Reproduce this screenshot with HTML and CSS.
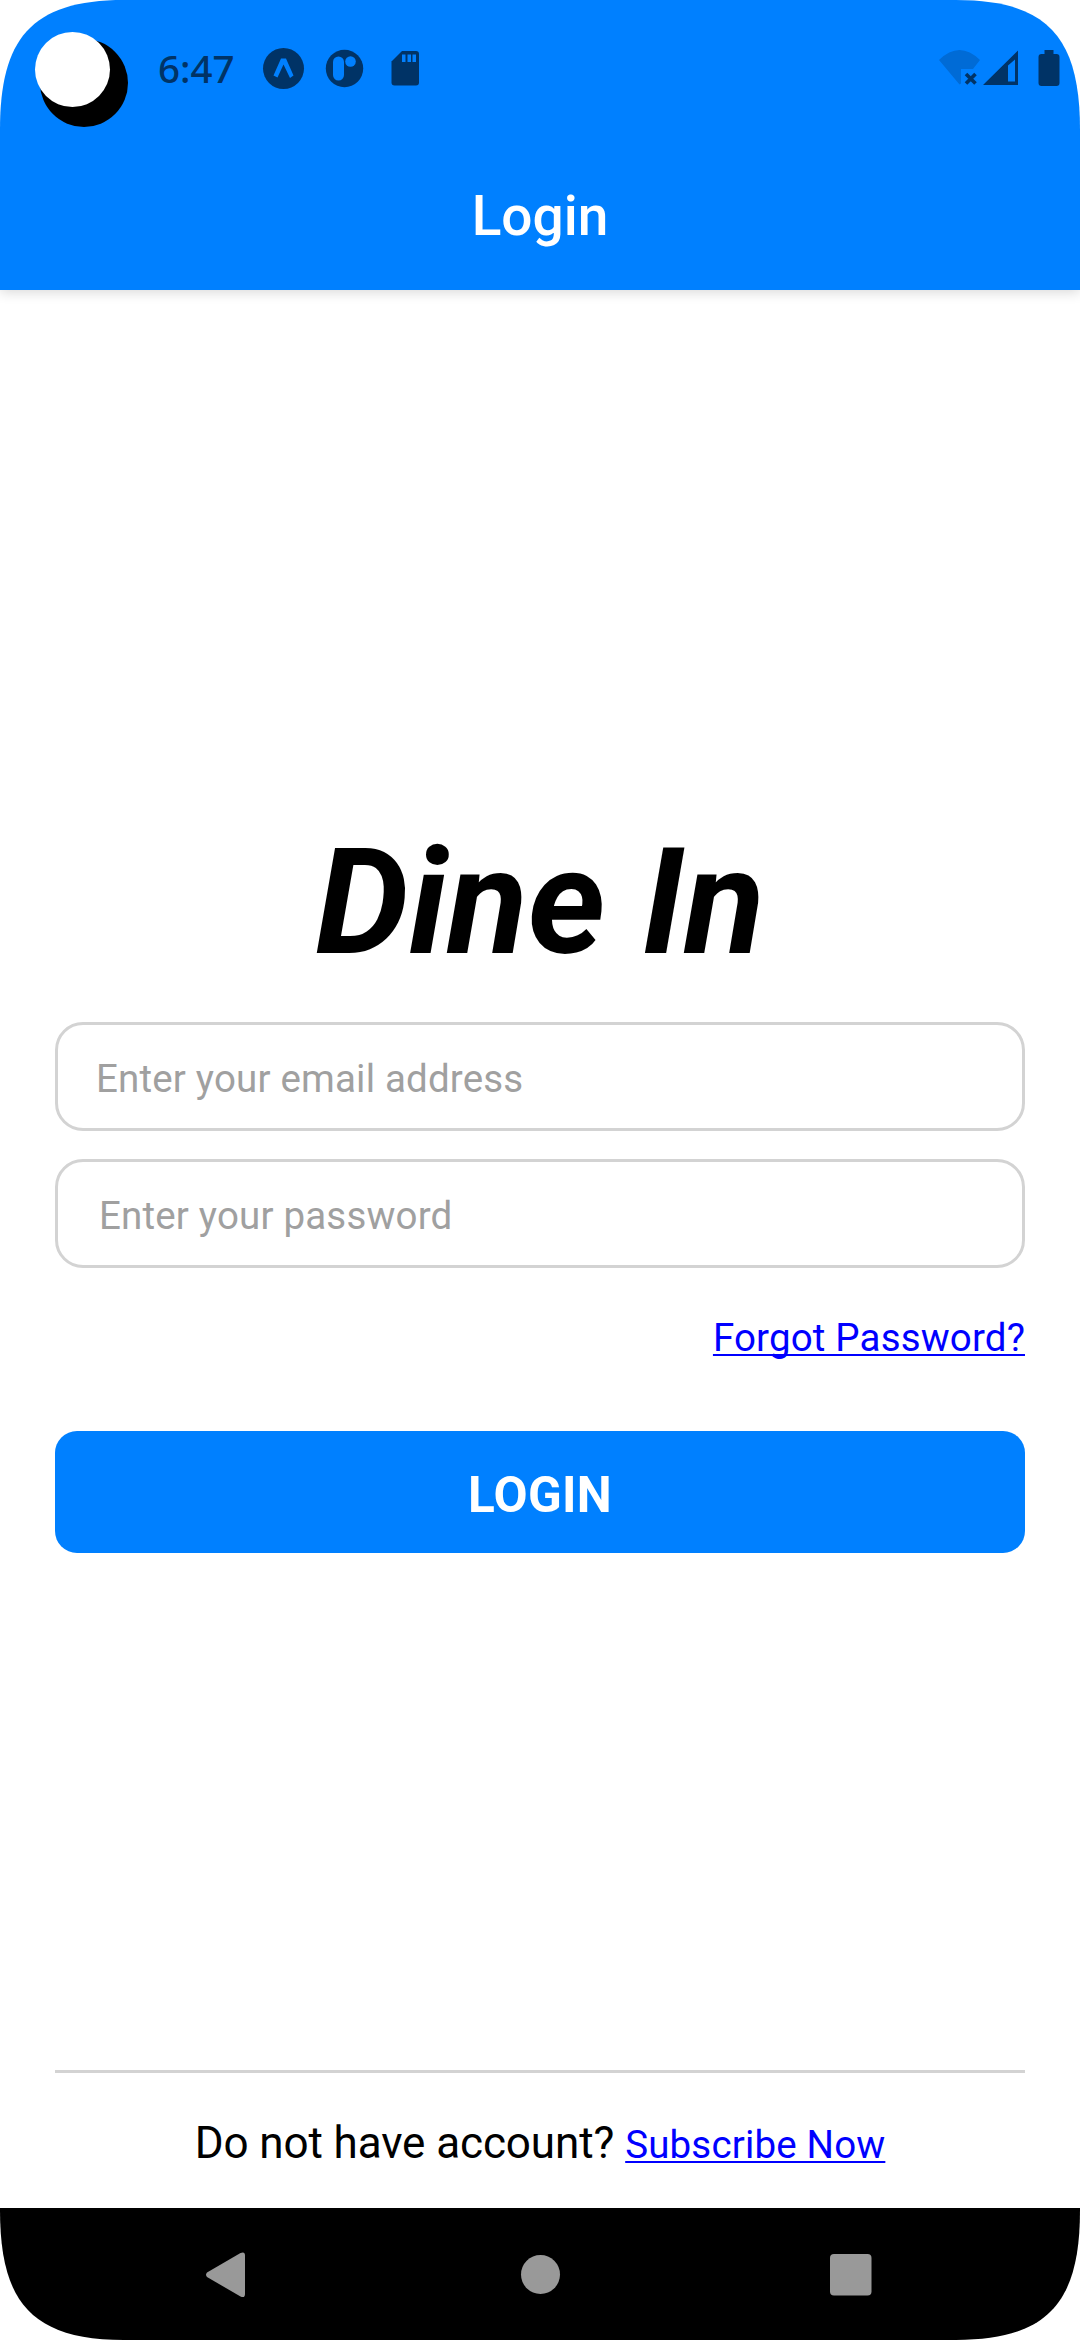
FILE: index.html
```html
<!DOCTYPE html>
<html lang="en">
<head>
<meta charset="utf-8">
<title>Login</title>
<link rel="stylesheet" href="styles.css">
</head>
<body>
<div class="screen">
  <header class="header">
    <div class="status">
      <svg class="camera" viewBox="0 0 140 140"><circle cx="84" cy="83" r="44"/><circle class="lens" cx="72.5" cy="69.5" r="37.5"/></svg>
      <span class="time">6:47</span>
      <svg class="notices" viewBox="0 0 170 60">
        <circle cx="28.5" cy="28.5" r="20.5"/>
        <path class="cut" d="M26 18.500h5L38.500 35.500 35 38 28.500 24.500 22.500 37.500 18.500 35.500z"/>
        <circle cx="89.500" cy="28.500" r="18.700"/>
        <rect class="cut" x="78" y="16.500" width="11" height="24" rx="5.500"/>
        <circle class="cut" cx="95.500" cy="21.500" r="5.300"/>
        <path d="M147 11h14q3 0 3 3v28.500q0 3-3 3h-21.500q-3 0-3-3V21.500z"/>
        <path class="cut" d="M147 14.500h3.500v7.500H147zM152.500 14.500h3.500v7.500h-3.500zM157.500 14.500h3.500v7.500h-3.500z"/>
      </svg>
      <svg class="signals" viewBox="0 0 130 50">
        <path class="faint" d="M3 20Q23.500 0 44 20L37 29H25v14.500L23.500 44.500z"/>
        <path class="cross" d="M30 34l9.500 9.500M39.500 34l-9.500 9.500"/>
        <path fill-rule="evenodd" d="M82 10.500v34.500H47zM79 19.500l-7 6v16h7z"/>
        <path d="M108.500 10h9v4h3q3 0 3 3v26q0 3-3 3h-15q-3 0-3-3V17q0-3 3-3h3z"/>
      </svg>
    </div>
    <h1 class="title">Login</h1>
  </header>
  <main class="main">
    <h2 class="brand">Dine In</h2>
    <form class="form">
      <input class="field" type="email" placeholder="Enter your email address">
      <input class="field field-password" type="password" placeholder="Enter your password">
      <a class="link forgot" href="#">Forgot Password?</a>
      <button class="submit" type="button">LOGIN</button>
    </form>
    <footer class="signup">
      <span>Do not have account?</span>
      <a class="link" href="#">Subscribe Now</a>
    </footer>
  </main>
  <nav class="nav">
    <svg viewBox="0 0 1080 132">
      <path d="M207 64.500L240.500 45Q245 43 245 47.500V86Q245 90.500 240.500 88.500L207 69Q205 66.800 207 64.500z"/>
      <circle cx="540.500" cy="66.500" r="19.500"/>
      <rect x="830" y="46" width="41.500" height="41.500" rx="4"/>
    </svg>
  </nav>
</div>
</body>
</html>
```
FILE: styles.css
```css
* { box-sizing: border-box; }

body {
  margin: 0;
  background: #fff;
  font-family: Roboto, "Liberation Sans", sans-serif;
}

.screen {
  display: flex;
  flex-direction: column;
  width: 1080px;
  height: 2340px;
  background: #fff;
  clip-path: path("M0 130C0 40 30 0 124 0H956C1050 0 1080 40 1080 130V2210C1080 2300 1050 2340 956 2340H124C30 2340 0 2300 0 2210Z");
}

.header {
  height: 290px;
  background: #0080ff;
  box-shadow: 0 2px 12px rgba(0, 0, 0, 0.16);
}

.status {
  display: flex;
  height: 140px;
}

.camera { width: 140px; height: 140px; }
.lens { fill: #fff; }

.time {
  width: 96px;
  margin-left: 18px;
  padding-top: 45px;
  font-family: "Noto Sans", sans-serif;
  font-size: 38.5px;
  font-weight: 500;
  line-height: 46px;
  color: #003366;
}

.notices {
  width: 170px;
  height: 60px;
  margin: 40px auto 0 1px;
  fill: #003366;
}
.notices .cut { fill: #0080ff; }

.signals {
  width: 130px;
  height: 50px;
  margin: 40px 14px 0 0;
  fill: #003366;
}
.signals .faint { fill: #006bd6; }
.signals .cross { stroke: #003366; stroke-width: 3.6; }

.title {
  margin: 0;
  padding-top: 44px;
  font-size: 55px;
  font-weight: 500;
  line-height: 64px;
  text-align: center;
  color: #fff;
}

.main {
  display: flex;
  flex: 1;
  flex-direction: column;
  padding: 525px 55px 0;
}

.brand {
  margin: 0;
  font-size: 148.5px;
  font-style: italic;
  font-weight: 700;
  line-height: 174px;
  text-align: center;
}

.form {
  display: flex;
  flex-direction: column;
  padding-top: 33px;
}

.field {
  width: 100%;
  height: 109px;
  margin: 0 0 28px;
  padding: 3px 38px 0;
  border: 3px solid #d3d3d3;
  border-radius: 28px;
  background: #fff;
  font: 38.5px Roboto, sans-serif;
  letter-spacing: 0.18px;
}
.field::placeholder { color: #a0a0a0; opacity: 1; }
.field-password { padding-left: 41px; }

.link {
  font-size: 38.5px;
  line-height: 46px;
  letter-spacing: 0.16px;
  color: #0000ff;
  text-decoration-thickness: 2px;
  text-underline-offset: 3px;
  text-decoration-skip-ink: none;
}

.forgot {
  align-self: flex-end;
  margin: 19px 0 70px;
}

.submit {
  height: 122px;
  padding: 5px 0 0;
  border: 0;
  border-radius: 22px;
  background: #0080ff;
  color: #fff;
  font: 700 49.5px Roboto, sans-serif;
  letter-spacing: 0.3px;
}

.signup {
  display: flex;
  align-items: baseline;
  justify-content: center;
  gap: 11px;
  height: 138px;
  margin-top: auto;
  padding-top: 44px;
  border-top: 3px solid #d3d3d3;
  border-image: linear-gradient(90deg, #777 1px, #d3d3d3 1px) 3;
  border-image-width: 3px 0 0;
  font-size: 44px;
  line-height: 52px;
  letter-spacing: -0.1px;
}

.nav {
  height: 132px;
  background: #000;
}
.nav svg { display: block; fill: #999; }
```
